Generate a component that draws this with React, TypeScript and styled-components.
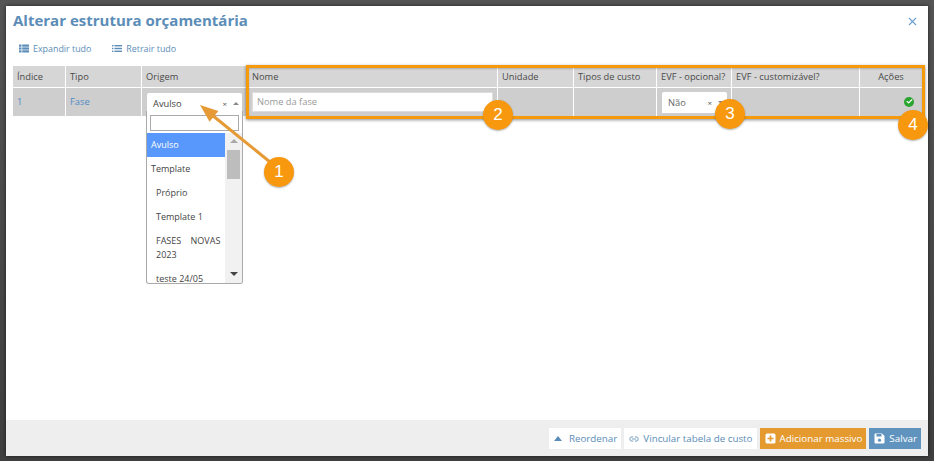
import React from 'react';
import styled, { createGlobalStyle } from 'styled-components';
import { X, Check, Link2 } from 'lucide-react';

const GlobalStyle = createGlobalStyle`
  html, body {
    margin: 0;
    height: 100%;
    overflow: hidden;
    background: #4a4a4a;
    font-family: "Open Sans", "Liberation Sans", sans-serif;
  }
  * { box-sizing: border-box; }
`;

const Page = styled.div`
  width: 934px;
  height: 461px;
  padding: 6px 6px 5px 6px;
  background: linear-gradient(#555555, #3f3f3f);
`;

const Modal = styled.div`
  position: relative;
  width: 922px;
  height: 450px;
  background: #fff;
  display: flex;
  flex-direction: column;
  box-shadow: 0 0 4px rgba(0, 0, 0, 0.6);
`;

const Header = styled.div`
  display: flex;
  justify-content: space-between;
  align-items: center;
  height: 28px;
  padding: 0 9px 0 7px;
`;

const Title = styled.h1`
  margin: 0;
  font-size: 15px;
  font-weight: 700;
  color: #5b8db8;
  white-space: nowrap;
`;

const CloseIcon = styled(X)`
  color: #6b9fcd;
  margin-top: 2px;
`;

const Toolbar = styled.div`
  display: flex;
  gap: 21px;
  height: 32px;
  padding: 0 0 4px 13px;
  align-items: center;
`;

const ToolLink = styled.span`
  display: flex;
  align-items: center;
  gap: 4px;
  font-size: 8.9px;
  color: #5b8db8;
`;

const Table = styled.div`
  display: grid;
  grid-template-columns: 52px 75px 105px 249px 75px 82px 74px 127px 62px;
  grid-template-rows: 21px 28px;
  gap: 1px;
  margin: 0 0 0 7px;
  width: 906px;
`;

const HeadCell = styled.div<{ $center?: boolean }>`
  background: #d6d6d6;
  font-size: 9.3px;
  color: #4a4a4a;
  display: flex;
  align-items: center;
  justify-content: ${(p) => (p.$center ? 'center' : 'flex-start')};
  padding: 0 4px 1px;
  white-space: nowrap;
`;

const Cell = styled.div<{ $end?: boolean }>`
  background: #cecece;
  font-size: 9.3px;
  color: #4f8bc4;
  display: flex;
  align-items: center;
  justify-content: ${(p) => (p.$end ? 'flex-end' : 'flex-start')};
  padding: 0 4px 1px;
`;

const SelectBox = styled.div<{ $width: number; $muted?: boolean }>`
  width: ${(p) => p.$width}px;
  height: 21px;
  background: #fff;
  display: flex;
  align-items: center;
  justify-content: space-between;
  padding: 0 3px 0 6px;
  font-size: 9.3px;
  color: ${(p) => (p.$muted ? '#666' : '#444')};
  border-radius: 2px 2px 0 0;
  margin: ${(p) => (p.$muted ? '1px' : '3px')} 0 0 1px;
`;

const SelectActions = styled.span`
  display: flex;
  align-items: center;
  gap: 6px;
  color: #555;
  font-size: 8px;
`;

const Caret = styled.span<{ $up?: boolean }>`
  width: 0;
  height: 0;
  border-left: 3px solid transparent;
  border-right: 3px solid transparent;
  ${(p) => (p.$up ? 'border-bottom: 3px solid #888;' : 'border-top: 3px solid #888;')}
`;

const ReorderCaret = styled.span`
  width: 0;
  height: 0;
  margin-right: 3px;
  border-left: 4px solid transparent;
  border-right: 4px solid transparent;
  border-bottom: 5px solid #5b8db8;
`;

const NameInput = styled.input`
  width: 241px;
  height: 20px;
  border: 1px solid #ddd;
  background: #fff;
  font-family: inherit;
  font-size: 9.3px;
  padding: 0 4px;
  &::placeholder { color: #999; }
`;

const OkBadge = styled.span`
  width: 10px;
  height: 10px;
  border-radius: 50%;
  background: #2aa52f;
  color: #fff;
  display: flex;
  align-items: center;
  justify-content: center;
  margin-right: 4px;
`;

const Dropdown = styled.div`
  position: absolute;
  left: 140px;
  top: 105px;
  width: 97px;
  height: 173px;
  background: #fff;
  border: 1px solid #aaa;
  border-top: none;
  border-radius: 0 0 3px 3px;
  overflow: hidden;
  z-index: 2;
`;

const SearchBox = styled.div`
  height: 16px;
  margin: 4px 3px 2px 3px;
  border: 1px solid #aaa;
  background: #fff;
`;

const OptionList = styled.div`
  display: flex;
  height: 150px;
`;

const Options = styled.div`
  width: 78px;
  flex: none;
`;

const Option = styled.div<{ $active?: boolean; $nested?: boolean }>`
  padding: 5px 4px 5px ${(p) => (p.$nested ? '9px' : '4px')};
  font-size: 9px;
  line-height: 14px;
  color: ${(p) => (p.$active ? '#fff' : '#444')};
  background: ${(p) => (p.$active ? '#5897fb' : 'transparent')};
  white-space: pre-wrap;
`;

const Scrollbar = styled.div`
  width: 17px;
  flex: none;
  background: #f1f1f1;
  display: flex;
  flex-direction: column;
  align-items: center;
  justify-content: space-between;
  padding: 6px 0 7px;
  position: relative;
`;

const ScrollThumb = styled.div`
  position: absolute;
  top: 17px;
  left: 2px;
  width: 13px;
  height: 29px;
  background: #bdbdbd;
`;

const ScrollArrow = styled.span<{ $down?: boolean }>`
  width: 0;
  height: 0;
  border-left: 4px solid transparent;
  border-right: 4px solid transparent;
  ${(p) => (p.$down ? 'border-top: 4px solid #444;' : 'border-bottom: 4px solid #aaa;')}
`;

const Spacer = styled.div`
  flex: 1;
`;

const Footer = styled.div`
  height: 36px;
  background: #eeeeee;
  display: flex;
  justify-content: flex-end;
  align-items: center;
  gap: 3px;
  padding: 1px 7px 0 0;
`;

const FootButton = styled.span<{ $bg: string; $color: string }>`
  height: 21px;
  display: flex;
  align-items: center;
  gap: 4px;
  padding: 0 4px 0 5px;
  font-size: 9.8px;
  background: ${(p) => p.$bg};
  color: ${(p) => p.$color};
  white-space: nowrap;
`;

const Highlight = styled.div`
  position: absolute;
  left: 240px;
  top: 59px;
  width: 679px;
  height: 54px;
  border: 3px solid #f59a0c;
  box-shadow: 0 1px 3px rgba(0, 0, 0, 0.45), inset 0 1px 2px rgba(0, 0, 0, 0.2);
  z-index: 3;
`;

const Marker = styled.div<{ $x: number; $y: number }>`
  position: absolute;
  left: ${(p) => p.$x}px;
  top: ${(p) => p.$y}px;
  width: 30px;
  height: 30px;
  border-radius: 50%;
  background: #f7980f;
  color: #fff;
  font-family: "Liberation Sans", sans-serif;
  font-size: 17px;
  display: flex;
  align-items: center;
  justify-content: center;
  z-index: 5;
  box-shadow: 0 1px 2px rgba(0, 0, 0, 0.3);
`;

const ArrowSvg = styled.svg`
  position: absolute;
  left: 190px;
  top: 90px;
  z-index: 4;
`;

const headers: { label: string; center?: boolean }[] = [
  { label: 'Índice' },
  { label: 'Tipo' },
  { label: 'Origem' },
  { label: 'Nome' },
  { label: 'Unidade' },
  { label: 'Tipos de custo' },
  { label: 'EVF - opcional?' },
  { label: 'EVF - customizável?' },
  { label: 'Ações', center: true },
];

const options = [
  { label: 'Avulso', active: true },
  { label: 'Template' },
  { label: 'Próprio', nested: true },
  { label: 'Template 1', nested: true },
  { label: 'FASES    NOVAS 2023', nested: true },
  { label: 'teste 24/05', nested: true },
];

const markers = [
  { n: 1, x: 258, y: 151 },
  { n: 2, x: 477, y: 94 },
  { n: 3, x: 709, y: 93 },
  { n: 4, x: 892, y: 104 },
];

function ExpandIcon() {
  return (
    <svg width="10" height="9" viewBox="0 0 10 9" fill="#5b8db8">
      <rect x="0" y="0.5" width="2.5" height="2.2" />
      <rect x="3.2" y="0.5" width="6.8" height="2.2" />
      <rect x="0" y="3.4" width="2.5" height="2.2" />
      <rect x="3.2" y="3.4" width="6.8" height="2.2" />
      <rect x="0" y="6.3" width="2.5" height="2.2" />
      <rect x="3.2" y="6.3" width="6.8" height="2.2" />
    </svg>
  );
}

function CollapseIcon() {
  return (
    <svg width="10" height="9" viewBox="0 0 10 9" fill="#5b8db8">
      <rect x="0" y="1" width="1.4" height="1.4" />
      <rect x="2.4" y="1" width="7.6" height="1.4" />
      <rect x="0" y="3.8" width="1.4" height="1.4" />
      <rect x="2.4" y="3.8" width="7.6" height="1.4" />
      <rect x="0" y="6.6" width="1.4" height="1.4" />
      <rect x="2.4" y="6.6" width="7.6" height="1.4" />
    </svg>
  );
}

function PlusBoxIcon() {
  return (
    <svg width="11" height="11" viewBox="0 0 11 11">
      <rect x="0.5" y="0.5" width="10" height="10" rx="1.5" fill="#fff" />
      <path d="M5.5 2.5v6M2.5 5.5h6" stroke="#e49a2f" strokeWidth="1.6" />
    </svg>
  );
}

function SaveIcon() {
  return (
    <svg width="11" height="11" viewBox="0 0 11 11">
      <path d="M0.5 1.5a1 1 0 0 1 1-1h6.5l2.5 2.5v6.5a1 1 0 0 1-1 1h-8a1 1 0 0 1-1-1z" fill="#fff" />
      <rect x="2.5" y="1" width="5" height="2.5" fill="#6094be" />
      <circle cx="5.5" cy="7.2" r="1.6" fill="#6094be" />
    </svg>
  );
}

function App() {
  return (
    <Page>
      <GlobalStyle />
      <Modal>
        <Header>
          <Title>Alterar estrutura orçamentária</Title>
          <CloseIcon size={13} strokeWidth={2} />
        </Header>
        <Toolbar>
          <ToolLink><ExpandIcon />Expandir tudo</ToolLink>
          <ToolLink><CollapseIcon />Retrair tudo</ToolLink>
        </Toolbar>
        <Table>
          {headers.map((h) => (
            <HeadCell key={h.label} $center={h.center}>{h.label}</HeadCell>
          ))}
          <Cell>1</Cell>
          <Cell>Fase</Cell>
          <Cell>
            <SelectBox $width={95}>
              Avulso
              <SelectActions>×<Caret $up /></SelectActions>
            </SelectBox>
          </Cell>
          <Cell><NameInput placeholder="Nome da fase" readOnly /></Cell>
          <Cell />
          <Cell />
          <Cell>
            <SelectBox $width={66} $muted>
              Não
              <SelectActions>×<Caret /></SelectActions>
            </SelectBox>
          </Cell>
          <Cell />
          <Cell $end>
            <OkBadge><Check size={7} strokeWidth={4} /></OkBadge>
          </Cell>
        </Table>
        <Dropdown>
          <SearchBox />
          <OptionList>
            <Options>
              {options.map((o) => (
                <Option key={o.label} $active={o.active} $nested={o.nested}>{o.label}</Option>
              ))}
            </Options>
            <Scrollbar>
              <ScrollArrow />
              <ScrollThumb />
              <ScrollArrow $down />
            </Scrollbar>
          </OptionList>
        </Dropdown>
        <Spacer />
        <Footer>
          <FootButton $bg="#fff" $color="#5b8db8"><ReorderCaret />Reordenar</FootButton>
          <FootButton $bg="#fff" $color="#5b8db8"><Link2 size={10} />Vincular tabela de custo</FootButton>
          <FootButton $bg="#e49a2f" $color="#fff"><PlusBoxIcon />Adicionar massivo</FootButton>
          <FootButton $bg="#6094be" $color="#fff"><SaveIcon />Salvar</FootButton>
        </Footer>
        <Highlight />
        <ArrowSvg width="90" height="80" viewBox="0 0 90 80">
          <path d="M74 66 L16 19" stroke="#e59a35" strokeWidth="3" fill="none" />
          <path d="M4 9 L22.4 14.9 L13.6 25.7 Z" fill="#e59a35" />
        </ArrowSvg>
        {markers.map((m) => (
          <Marker key={m.n} $x={m.x} $y={m.y}>{m.n}</Marker>
        ))}
      </Modal>
    </Page>
  );
}

export default App;
